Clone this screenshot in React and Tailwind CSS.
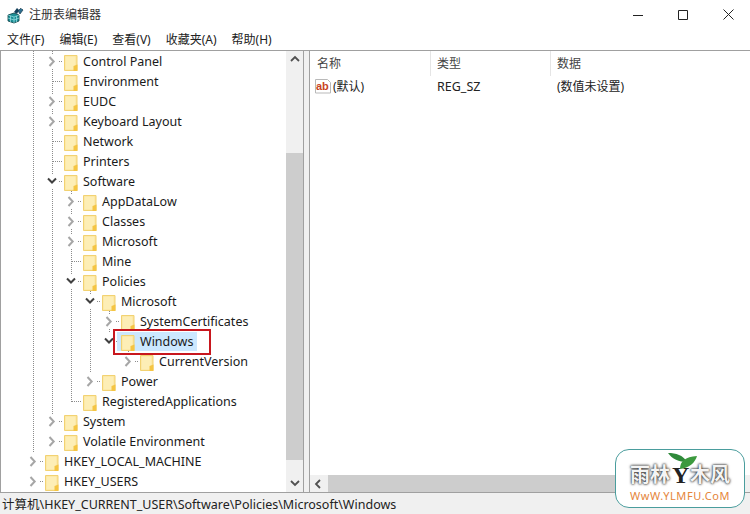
const rows = [
  { d: 1, name: "Control Panel", c: "closed" },
  { d: 1, name: "Environment" },
  { d: 1, name: "EUDC", c: "closed" },
  { d: 1, name: "Keyboard Layout", c: "closed" },
  { d: 1, name: "Network" },
  { d: 1, name: "Printers" },
  { d: 1, name: "Software", c: "open" },
  { d: 2, name: "AppDataLow", c: "closed" },
  { d: 2, name: "Classes", c: "closed" },
  { d: 2, name: "Microsoft", c: "closed" },
  { d: 2, name: "Mine" },
  { d: 2, name: "Policies", c: "open" },
  { d: 3, name: "Microsoft", c: "open" },
  { d: 4, name: "SystemCertificates", c: "closed" },
  { d: 4, name: "Windows", c: "open", selected: true },
  { d: 5, name: "CurrentVersion", c: "closed" },
  { d: 3, name: "Power", c: "closed" },
  { d: 2, name: "RegisteredApplications" },
  { d: 1, name: "System", c: "closed" },
  { d: 1, name: "Volatile Environment", c: "closed" },
  { d: 0, name: "HKEY_LOCAL_MACHINE", c: "closed" },
  { d: 0, name: "HKEY_USERS", c: "closed" },
];

const menus = ["文件(F)", "编辑(E)", "查看(V)", "收藏夹(A)", "帮助(H)"];

const guides = [
  [33, 51, 452],
  [52, 51, 422],
  [71, 191, 402],
  [90, 291, 372],
  [109, 311, 332],
  [128, 351, 356],
];

function Folder() {
  return (
    <svg width="14" height="16" viewBox="0 0 14 16" className="shrink-0 mt-[3px]">
      <path d="M0.5 0.5h12.5v15h-12.5z" fill="#fbe49a" stroke="#f2d272" />
      <path d="M1.5 1.5h10v13h-10z" fill="#fdeeb6" />
      <path d="M9.5 16v-5l4-1.5v6.5z" fill="#f5c544" />
    </svg>
  );
}

function Chevron({ type }) {
  if (type === "open") {
    return (
      <svg width="10" height="8" viewBox="0 0 10 8">
        <path d="M1 1.5l4 4 4-4" fill="none" stroke="#404040" strokeWidth="2" />
      </svg>
    );
  }
  return (
    <svg width="8" height="11" viewBox="0 0 8 11">
      <path d="M1.5 1l4.2 4.5-4.2 4.5" fill="none" stroke="#a6a6a6" strokeWidth="2" />
    </svg>
  );
}

// dotted connector lines of the tree
function Guides() {
  return (
    <svg width="287" height="441" className="absolute left-[-1px] top-0 pointer-events-none">
      <g stroke="#8c8c8c" strokeDasharray="1 1" fill="none">
        {guides.map(([x, y1, y2]) => (
          <line key={x} x1={x + 0.5} x2={x + 0.5} y1={y1 - 51} y2={y2 - 51} />
        ))}
        {rows.map((row, i) => {
          const y = 10.5 + i * 20;
          const folderX = 45 + row.d * 19;
          const x1 = row.c ? folderX - 5 : folderX - 11;
          return <line key={i} x1={x1} x2={folderX - 1} y1={y} y2={y} />;
        })}
      </g>
    </svg>
  );
}

function TreeRow({ row }) {
  return (
    <div
      className="flex items-center h-5 relative"
      style={{ paddingLeft: 26 + row.d * 19 }}
    >
      <span className="w-[18px] flex justify-start shrink-0">
        {row.c && (
          <span className="w-[11px] h-[13px] bg-white flex items-center justify-center">
            <Chevron type={row.c} />
          </span>
        )}
      </span>
      <span className="relative flex items-center h-5">
        {row.selected && <span className="absolute left-[-4px] top-[1px] w-[80px] h-[19px] bg-[#cce8ff]" />}
        <span className="relative flex items-center">
          <Folder />
          <span className="ml-[5px] mt-[2px] text-[#1a1a1a] whitespace-nowrap">{row.name}</span>
        </span>
      </span>
      {row.selected && (
        <span className="absolute left-[112px] top-[-2px] w-[98px] h-[26px] border-2 border-[#c8171e]" />
      )}
    </div>
  );
}

function ScrollBtn({ dir }) {
  const d = { up: "M1 6l4-4 4 4", down: "M1 2l4 4 4-4", left: "M6 1l-4 4 4 4" }[dir];
  return (
    <svg width="10" height="10" viewBox="0 0 10 10">
      <path d={d} fill="none" stroke="#505050" strokeWidth="1.8" />
    </svg>
  );
}

function RegIcon() {
  return (
    <svg width="18" height="18" viewBox="0 0 18 18">
      <path d="M1 9l6-2 5 2v6l-5 2-6-2z" fill="#1d8f96" stroke="#0c3f45" strokeWidth="0.8" />
      <path d="M1 9l6 2 5-2M7 11v6M3.5 10v6M9.5 10v6M1 12l6 2 5-2" fill="none" stroke="#9fe3e6" strokeWidth="0.7" />
      <path d="M7 6l3-4 2 2-2 4z" fill="#123f5a" />
      <path d="M11 5l3-3 2 2-3 4z" fill="#2d6f8f" stroke="#0c2a3d" strokeWidth="0.6" />
      <path d="M14 1l1 1-1 1z" fill="#fff" />
    </svg>
  );
}

function ValueIcon() {
  return (
    <svg width="17" height="17" viewBox="0 0 17 17" className="shrink-0">
      <path d="M0.5 0.5h12l3 3v10.5h-15z" fill="#fff" stroke="#b9b9b9" />
      <text x="1" y="11" fontSize="11" fontWeight="700" fill="#c8431e" fontFamily="Liberation Sans, sans-serif">ab</text>
    </svg>
  );
}

function Logo() {
  return (
    <div className="absolute left-[615px] top-[449px] w-[130px] h-[59px] bg-white rounded-[14px] border-[1.5px] border-[#4a9d9d] flex flex-col items-center pt-[14px]">
      <div className="flex items-center text-[20px] leading-[22px] font-bold text-[#f4f4f4] [text-shadow:0_0_2px_#222,0_0_3px_#444]">
        <span>雨林</span>
        <span className="mx-[2px] w-[16px] text-center text-[#222] font-['Liberation_Serif',serif] text-[24px] [text-shadow:none]">Y</span>
        <span>木风</span>
      </div>
      <svg width="32" height="18" viewBox="0 0 32 18" className="absolute left-[52px] top-[3px]">
        <path d="M0 0c8 0 15 2 19 9C11 9 4 6 0 0z" fill="#2f8a3a" />
        <path d="M12 16c0-8 5-12 17-13-2 7-8 12-17 13z" fill="#3c9a3f" />
      </svg>
      <div className="mt-[3px] text-[11px] leading-[14px] text-[#e5853a] tracking-[0.6px] whitespace-nowrap">
        WwW.YLMFU.CoM
      </div>
    </div>
  );
}

export default function App() {
  return (
    <div className="relative w-[750px] h-[514px] overflow-hidden bg-white flex flex-col text-[12.5px] font-['Noto_Sans','Noto_Sans_CJK_SC',sans-serif]">
      {/* title bar */}
      <div className="h-[29px] flex items-center pl-[7px] shrink-0">
        <RegIcon />
        <span className="ml-[4px] text-[12px] text-[#333]">注册表编辑器</span>
        <div className="ml-auto flex items-center gap-[35px] pr-[16px]">
          <svg width="10" height="10" viewBox="0 0 10 10"><path d="M0 5.5h10" stroke="#222" /></svg>
          <svg width="10" height="10" viewBox="0 0 10 10"><path d="M0.5 0.5h9v9h-9z" fill="none" stroke="#222" /></svg>
          <svg width="11" height="11" viewBox="0 0 11 11"><path d="M0.5 0.5l10 10M10.5 0.5l-10 10" stroke="#222" /></svg>
        </div>
      </div>

      {/* menu bar */}
      <div className="h-[21px] flex items-center gap-[15px] pl-[7px] text-[12px] text-[#222] shrink-0">
        {menus.map((m) => (
          <span key={m}>{m}</span>
        ))}
      </div>

      {/* panes */}
      <div className="h-[443px] flex bg-[#f0f0f0] border-t border-b border-[#a0a0a0] shrink-0">
        <div className="w-[304px] flex border-l border-r border-[#a0a0a0] bg-white shrink-0">
          <div className="relative flex-1 overflow-hidden">
            <Guides />
            {rows.map((row, i) => (
              <TreeRow key={i} row={row} />
            ))}
          </div>
          <div className="w-[17px] bg-[#f0f0f0] flex flex-col shrink-0">
            <div className="h-[17px] flex items-center justify-center"><ScrollBtn dir="up" /></div>
            <div className="flex-1 pt-[85px] pb-[15px] flex">
              <div className="flex-1 bg-[#cdcdcd]" />
            </div>
            <div className="h-[17px] flex items-center justify-center"><ScrollBtn dir="down" /></div>
          </div>
        </div>

        <div className="ml-[5px] flex-1 flex flex-col border-l border-[#a0a0a0] bg-white">
          <div className="flex-1">
            <div className="h-[25px] flex text-[12px] text-[#444]">
              <div className="w-[121px] pl-[7px] border-r border-[#e5e5e5] flex items-center">名称</div>
              <div className="w-[120px] pl-[6px] border-r border-[#e5e5e5] flex items-center">类型</div>
              <div className="pl-[6px] flex items-center">数据</div>
            </div>
            <div className="h-[22px] flex items-center text-[12px] text-[#222]">
              <div className="w-[121px] pl-[5px] flex items-center gap-px">
                <ValueIcon />
                <span>(默认)</span>
              </div>
              <div className="w-[120px] pl-[6px] text-[12.5px]">REG_SZ</div>
              <div className="pl-[6px]">(数值未设置)</div>
            </div>
          </div>
          <div className="h-[17px] bg-[#f0f0f0] flex">
            <div className="w-[18px] flex items-center justify-center"><ScrollBtn dir="left" /></div>
            <div className="flex-1 bg-[#cdcdcd] mr-[16px]" />
          </div>
        </div>
      </div>

      {/* status bar */}
      <div className="flex-1 bg-[#f0f0f0] pl-[2px] pt-[3px] flex items-center text-[12.5px] text-[#222]">
        计算机\HKEY_CURRENT_USER\Software\Policies\Microsoft\Windows
      </div>

      <Logo />
    </div>
  );
}
